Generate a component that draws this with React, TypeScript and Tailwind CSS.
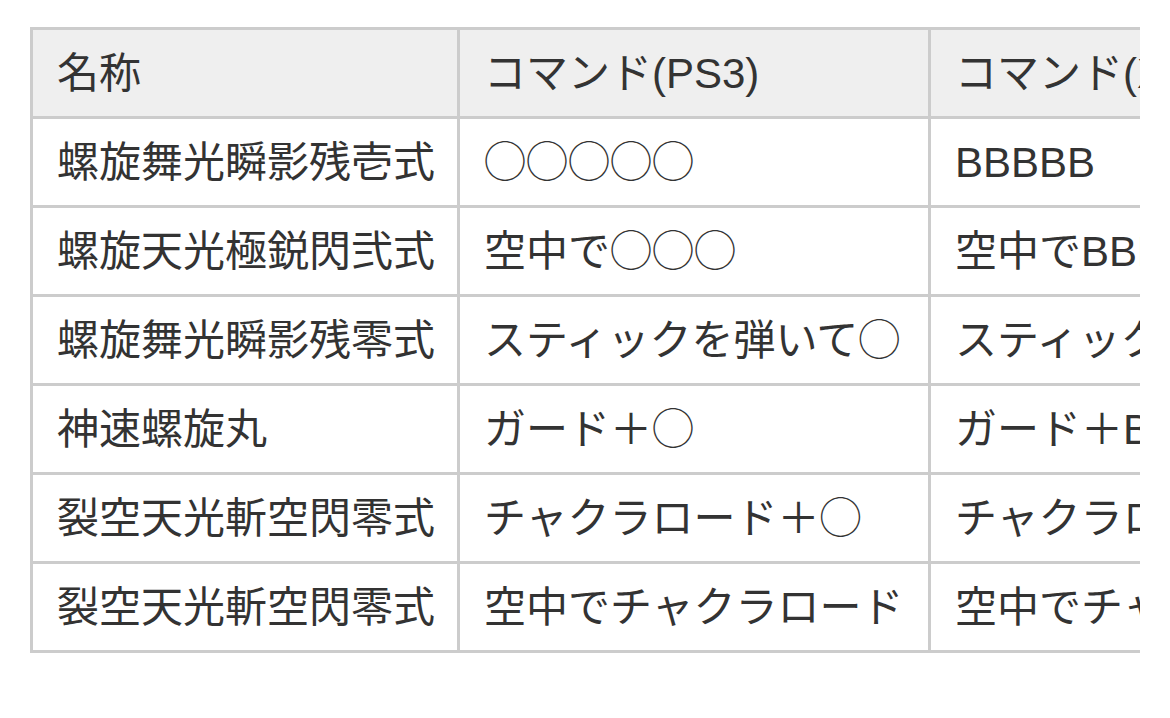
const rows: [string, string, string][] = [
  ["螺旋舞光瞬影残壱式", "◯◯◯◯◯", "BBBBB"],
  ["螺旋天光極鋭閃弐式", "空中で◯◯◯", "空中でBBB"],
  ["螺旋舞光瞬影残零式", "スティックを弾いて◯", "スティックを弾いてB"],
  ["神速螺旋丸", "ガード＋◯", "ガード＋B"],
  ["裂空天光斬空閃零式", "チャクラロード＋◯", "チャクラロード＋B"],
  ["裂空天光斬空閃零式", "空中でチャクラロード", "空中でチャクラロード"],
];

const cell = "h-[89px] border-[3px] border-[#cccccc] px-6 pt-[2px] text-left align-middle font-normal whitespace-nowrap";

export default function App() {
  return (
    <div className="min-h-[718px] bg-white pt-[27px] pl-[30px]">
      <div className="w-[1110px] overflow-hidden">
        <table
          className="table-fixed border-collapse text-[42px] leading-none text-[#333333]"
          style={{ fontFamily: '"Liberation Sans", "Noto Sans CJK JP", sans-serif', width: 1400 }}
        >
          <colgroup>
            <col className="w-[427px]" />
            <col className="w-[471px]" />
            <col className="w-[502px]" />
          </colgroup>
          <thead>
            <tr className="bg-[#efefef]">
              <th className={cell}>名称</th>
              <th className={cell}>コマンド(PS3)</th>
              <th className={cell}>コマンド(XBOX360)</th>
            </tr>
          </thead>
          <tbody>
            {rows.map((r, i) => (
              <tr key={i}>
                <td className={cell}>{r[0]}</td>
                <td className={cell}>{r[1]}</td>
                <td className={cell}>{r[2]}</td>
              </tr>
            ))}
          </tbody>
        </table>
      </div>
    </div>
  );
}
